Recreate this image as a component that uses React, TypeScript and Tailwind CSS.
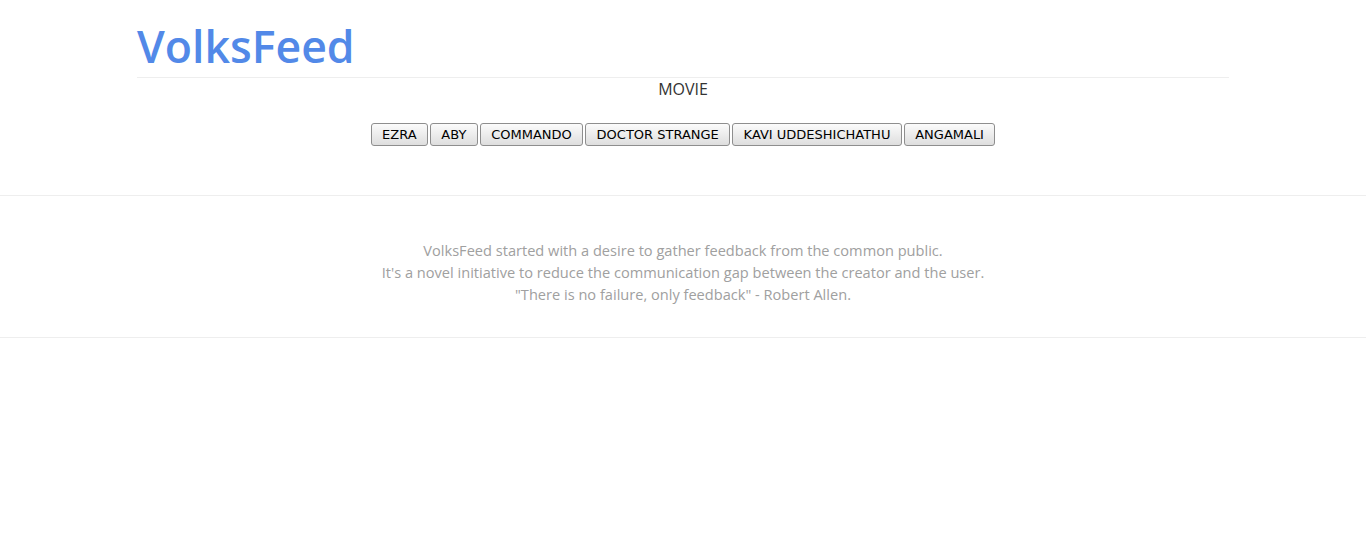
const movies = [
  "EZRA",
  "ABY",
  "COMMANDO",
  "DOCTOR STRANGE",
  "KAVI UDDESHICHATHU",
  "ANGAMALI",
];

const App = () => {
  return (
    <div className="min-h-[556px] bg-white font-['Open_Sans',sans-serif]">
      <div className="mx-auto w-[1092px]">
        <h1 className="pt-[18px] text-[44.6px] font-semibold leading-[56px] text-[#5289e8]">
          VolksFeed
        </h1>
        <div className="mt-[3px] border-t border-[#eee]"></div>
        <h2 className="text-center text-[16px] leading-[22px] text-[#333]">
          MOVIE
        </h2>
        <div className="mt-[23px] flex justify-center gap-[2px]">
          {movies.map((movie, index) => (
            <button
              key={index}
              type="button"
              className="h-[23px] rounded-[3px] border border-[#8e8e8e] bg-gradient-to-b from-[#fbfbfb] to-[#dedede] px-[10.4px] font-['DejaVu_Sans',sans-serif] text-[13px] leading-[21px] text-black"
            >
              {movie}
            </button>
          ))}
        </div>
      </div>
      <div className="mt-[49px] border-t border-[#eee]"></div>
      <div className="pt-[43px] pb-[32px] text-center text-[14.6px] leading-[22px] text-[#a0a0a0]">
        <p>VolksFeed started with a desire to gather feedback from the common public.</p>
        <p>It's a novel initiative to reduce the communication gap between the creator and the user.</p>
        <p>"There is no failure, only feedback" - Robert Allen.</p>
      </div>
      <div className="border-t border-[#eee]"></div>
    </div>
  );
};

export default App;
